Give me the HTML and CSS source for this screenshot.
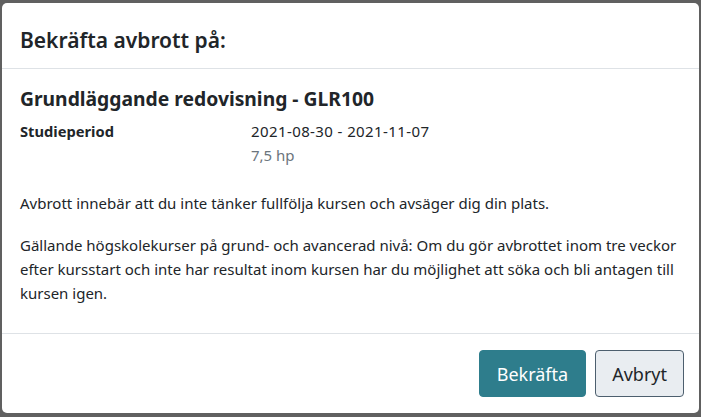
FILE: index.html
```html
<!DOCTYPE html>
<html lang="sv">
<head>
<meta charset="utf-8">
<link rel="stylesheet" href="styles.css">
</head>
<body>
<div class="modal">
  <div class="modal-header">
    <h2 class="modal-title">Bekräfta avbrott på:</h2>
  </div>
  <div class="modal-body">
    <h3 class="course-title">Grundläggande redovisning - GLR100</h3>
    <div class="course-info">
      <div class="label">Studieperiod</div>
      <div class="values">
        <div class="period">2021-08-30 - 2021-11-07</div>
        <div class="credits">7,5 hp</div>
      </div>
    </div>
    <p class="text">Avbrott innebär att du inte tänker fullfölja kursen och avsäger dig din plats.</p>
    <p class="text">Gällande högskolekurser på grund- och avancerad nivå: Om du gör avbrottet inom tre veckor efter kursstart och inte har resultat inom kursen har du möjlighet att söka och bli antagen till kursen igen.</p>
  </div>
  <div class="modal-footer">
    <button class="btn btn-primary">Bekräfta</button>
    <button class="btn btn-secondary">Avbryt</button>
  </div>
</div>
</body>
</html>
```
FILE: styles.css
```css
html, body {
  margin: 0;
  padding: 0;
  height: 100%;
}
* {
  box-sizing: border-box;
}
body {
  background: #606060;
  font-family: "Noto Sans", "Open Sans", sans-serif;
  color: #212529;
  overflow: hidden;
}
.modal {
  margin: 3px 2px 0 2px;
  height: 410px;
  background: #fff;
  border-radius: 5px;
  display: flex;
  flex-direction: column;
}
.modal-header {
  height: 66px;
  padding: 23px 18px 0 18px;
  border-bottom: 1px solid #dee2e6;
}
.modal-title {
  margin: 0;
  font-size: 21px;
  line-height: 28px;
  font-weight: 600;
  color: #212529;
}
.modal-body {
  flex: 1;
  padding: 16px 18px 0 18px;
  border-bottom: 1px solid #dee2e6;
}
.course-title {
  margin: 0 0 6px 0;
  font-size: 19.3px;
  font-weight: 700;
  line-height: 28px;
}
.course-info {
  display: grid;
  grid-template-columns: 231px 1fr;
  font-size: 15px;
  line-height: 24px;
}
.label {
  font-weight: 700;
  font-size: 14.7px;
}
.period {
  letter-spacing: 0.4px;
}
.credits {
  color: #6c757d;
}
.text {
  font-size: 15px;
  line-height: 24px;
  margin: 0 0 18px 0;
}
.course-info + .text {
  margin-top: 24px;
}
.modal-footer {
  height: 79px;
  padding: 0 15px 0 0;
  display: flex;
  justify-content: flex-end;
  align-items: center;
  gap: 9px;
}
.btn {
  font-family: inherit;
  font-size: 18px;
  height: 47px;
  padding: 0 16px;
  border-radius: 4px;
  cursor: pointer;
}
.btn-primary {
  padding: 0 17px;
  background: #2e7d8c;
  border: 1px solid #2e7d8c;
  color: #fff;
}
.btn-secondary {
  background: #e9edf1;
  border: 1px solid #4d5f6e;
  color: #212529;
}
```
